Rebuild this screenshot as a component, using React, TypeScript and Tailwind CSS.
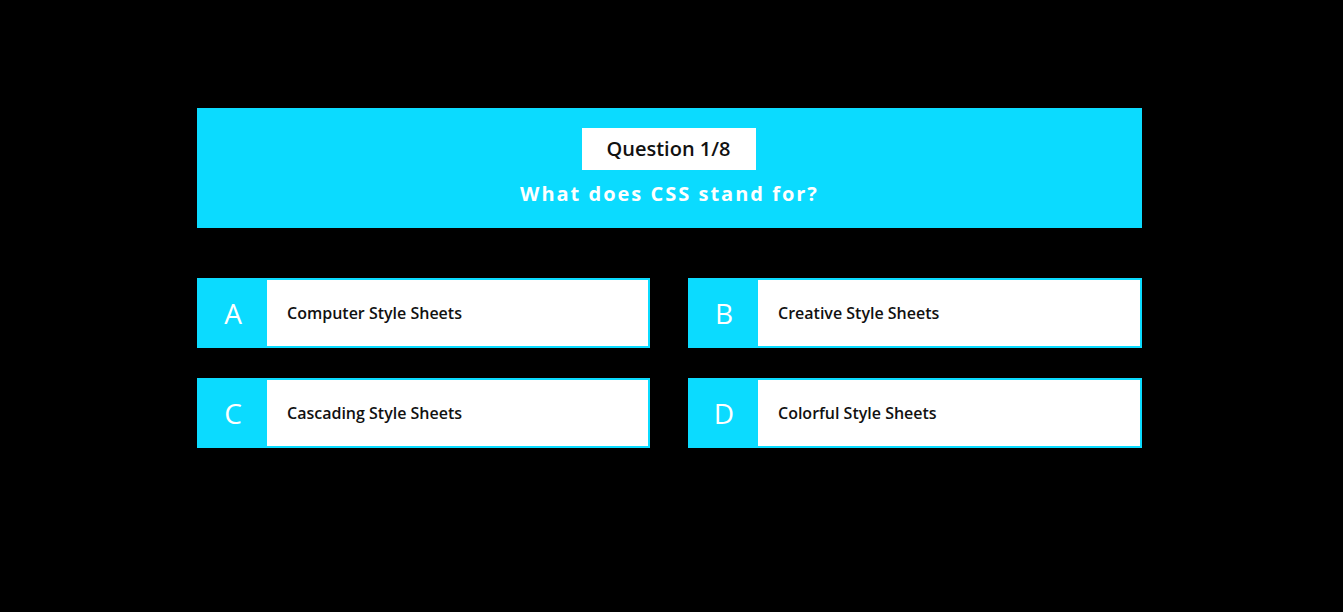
const OPTIONS = [
  { key: "A", text: "Computer Style Sheets" },
  { key: "B", text: "Creative Style Sheets" },
  { key: "C", text: "Cascading Style Sheets" },
  { key: "D", text: "Colorful Style Sheets" },
];

export default function App() {
  return (
    <div className="min-h-[612px] bg-black pt-[108px] font-['Open_Sans',sans-serif]">
      <div className="ml-[197px] w-[945px]">
        {/* Question header */}
        <div className="flex h-[120px] flex-col items-center bg-[#0bdbff] pt-5">
          <div className="flex h-[42px] w-[174px] -translate-x-px items-center justify-center bg-white text-[20px] font-semibold text-[#111]">
            Question 1/8
          </div>
          <h1 className="mt-[12px] text-[20px] font-bold leading-6 tracking-[2px] text-white">
            What does CSS stand for?
          </h1>
        </div>

        {/* Answers */}
        <div className="mt-[50px] grid grid-cols-[453px_454px] gap-x-[38px] gap-y-[30px]">
          {OPTIONS.map((o) => (
            <div
              key={o.key}
              className="flex h-[70px] cursor-pointer border-2 border-[#0bdbff] bg-white"
            >
              <div className="flex w-[68px] shrink-0 items-center justify-center bg-[#0bdbff] text-[28px] text-white">
                {o.key}
              </div>
              <div className="flex items-center pl-5 text-base font-semibold text-[#111]">
                {o.text}
              </div>
            </div>
          ))}
        </div>
      </div>
    </div>
  );
}
